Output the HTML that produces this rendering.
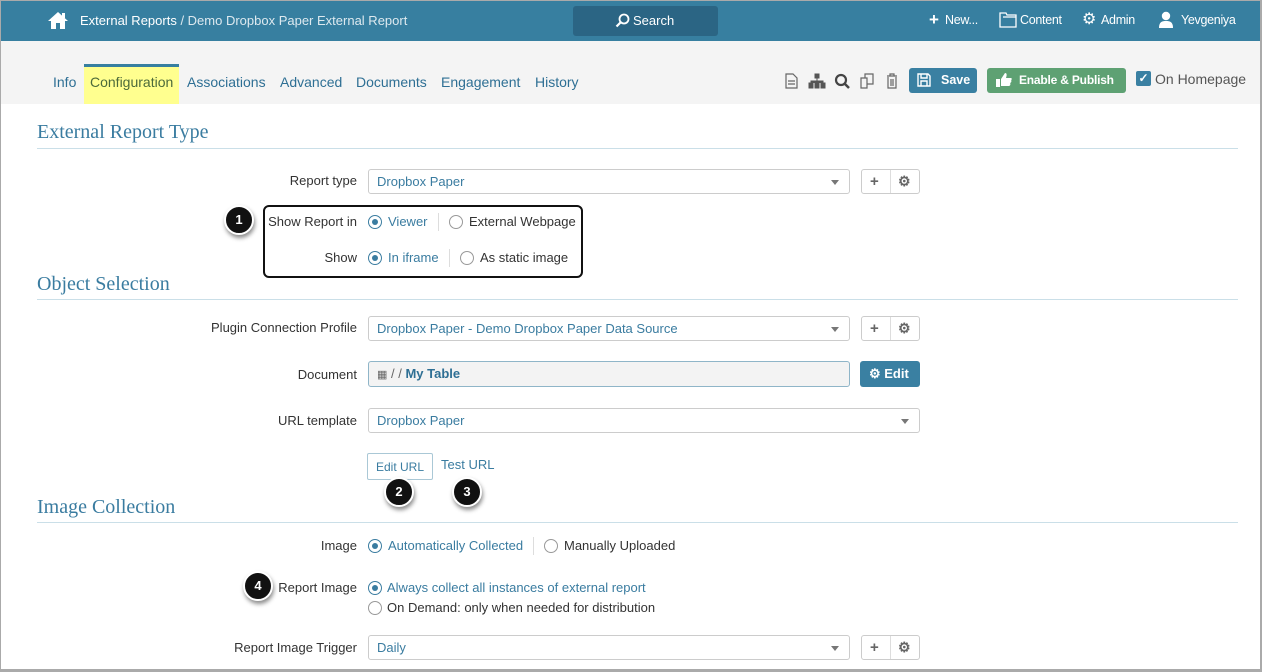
<!DOCTYPE html>
<html><head><meta charset="utf-8"><style>
*{box-sizing:border-box;margin:0;padding:0}
body{width:1262px;height:672px;overflow:hidden;background:#fff;font-family:"Liberation Sans",sans-serif;font-size:13px;color:#333;position:relative}
.a{position:absolute}
.frame{position:absolute;left:0;top:0;width:1262px;height:672px;border:1px solid #aaa;border-bottom:3px solid #aaa;border-right:2px solid #aaa;pointer-events:none;z-index:10}
.hdr{left:0;top:0;width:1262px;height:41px;background:#377fa0;color:#fff}
.tabbar{left:0;top:41px;width:1262px;height:63px;background:#f4f4f4}
.tab{position:absolute;top:74px;font-size:14px;color:#2e6f94}
h2{position:absolute;left:37px;font-family:"Liberation Serif",serif;font-weight:normal;font-size:20px;color:#3a7ca0}
.hl{position:absolute;left:37px;width:1201px;height:1px;background:#cadfe8}
.lbl{position:absolute;right:905px;font-size:13px;color:#333;text-align:right;white-space:nowrap;margin-top:-1px}
.inp{position:absolute;left:368px;height:25px;border:1px solid #ccc;border-radius:3px;background:#fff;color:#3a7ca0;padding:4px 8px;font-size:13px}
.caret{position:absolute;right:10px;top:10px;width:0;height:0;border-left:4px solid transparent;border-right:4px solid transparent;border-top:5px solid #777}
.btns{position:absolute;left:861px;width:59px;height:25px;border:1px solid #ccc;border-radius:3px;background:#fff}
.btns span{position:absolute;top:3px;font-size:15px;color:#666;font-weight:bold}
.btns i{position:absolute;left:28px;top:0;width:1px;height:23px;background:#ddd}
.rad{position:absolute;width:14px;height:14px;border:1px solid #999;border-radius:50%;background:#fff}
.rad.on{border-color:#3a7ca0}
.rad.on:after{content:"";position:absolute;left:3px;top:3px;width:6px;height:6px;border-radius:50%;background:#3a7ca0}
.rt{position:absolute;font-size:13px;white-space:nowrap;margin-top:-1px}
.blue{color:#3a7ca0}
.sep{position:absolute;width:1px;height:18px;background:#ddd}
.num{position:absolute;width:30px;height:30px;border-radius:50%;background:#111;color:#fff;font-weight:bold;font-size:13px;text-align:center;line-height:26px;box-shadow:1px 3px 4px rgba(0,0,0,.45);border:2px solid #fff}
</style></head><body>
<div class="a hdr">
 <svg class="a" style="left:47px;top:11px" width="22" height="18" viewBox="0 0 22 18"><path d="M11 1 L1 10 L4 10 L4 18 L9 18 L9 12 L13 12 L13 18 L18 18 L18 10 L21 10 Z" fill="#fff"/><rect x="15" y="2" width="3" height="5" fill="#fff"/></svg>
 <div class="a" style="left:80px;top:13px;font-size:13px">External Reports <span style="color:#dde9ef">/ Demo Dropbox Paper External Report</span></div>
 <div class="a" style="left:573px;top:6px;width:145px;height:30px;background:#2b6584;border-radius:3px"></div>
 <svg class="a" style="left:615px;top:13px" width="15" height="15" viewBox="0 0 15 15"><circle cx="9" cy="6" r="4.5" fill="none" stroke="#fff" stroke-width="1.8"/><path d="M6 9 L1.5 13.5" stroke="#fff" stroke-width="2.2"/></svg>
 <div class="a" style="left:633px;top:13px;font-size:13px">Search</div>
 <div class="a" style="left:929px;top:10px;font-size:17px;font-weight:bold">+</div>
 <div class="a" style="left:945px;top:13px;font-size:12.5px;letter-spacing:-.3px">New...</div>
 <svg class="a" style="left:999px;top:12px" width="18" height="16" viewBox="0 0 18 16"><path d="M1 1 H7 L8 3 H17 V15 H1 Z M4 5 H17" fill="none" stroke="#fff" stroke-width="1.3"/></svg>
 <div class="a" style="left:1020px;top:13px;font-size:12.5px;letter-spacing:-.3px">Content</div>
 <div class="a" style="left:1082px;top:9px;font-size:16px">⚙</div>
 <div class="a" style="left:1101px;top:13px;font-size:12.5px;letter-spacing:-.3px">Admin</div>
 <svg class="a" style="left:1158px;top:11px" width="16" height="17" viewBox="0 0 16 17"><circle cx="8" cy="5" r="4.2" fill="#fff"/><path d="M1 17 C1 11 4 10 8 10 C12 10 15 11 15 17 Z" fill="#fff"/></svg>
 <div class="a" style="left:1181px;top:13px;font-size:12.5px;letter-spacing:-.3px">Yevgeniya</div>
</div>
<div class="a tabbar"></div>
<div class="a" style="left:84px;top:64px;width:95px;height:40px;background:#ffff8f;border-top:3px solid #377fa0"></div>
<div class="tab" style="left:53px">Info</div>
<div class="tab" style="left:90px;color:#4c6a3a">Configuration</div>
<div class="tab" style="left:187px">Associations</div>
<div class="tab" style="left:280px">Advanced</div>
<div class="tab" style="left:356px">Documents</div>
<div class="tab" style="left:441px">Engagement</div>
<div class="tab" style="left:535px">History</div>
<svg class="a" style="left:784px;top:72px" width="120" height="18" viewBox="0 0 120 18">
 <path d="M2 2 H9 L13 6 V16 H2 Z M4 9 H11 M4 12 H11" fill="none" stroke="#666" stroke-width="1.2"/>
 <path d="M31 2 h4 v4 h-4z M25 11 h4 v5 h-4z M31 11 h4 v5 h-4z M37 11 h4 v5 h-4z M33 6 v5 M27 11 v-2 h12 v2" fill="#555" stroke="#555" stroke-width="1"/>
 <circle cx="57" cy="8" r="5" fill="none" stroke="#444" stroke-width="2.2"/><path d="M61 12 L65 16" stroke="#444" stroke-width="2.5"/>
 <path d="M77 6 H83 V16 H77 Z M81 6 V2 H89 V12 H83" fill="none" stroke="#666" stroke-width="1.2"/>
 <path d="M103 4 H113 M106 4 V2 H110 V4 M104 5 V16 H112 V5 M107 7 V14 M109 7 V14" fill="none" stroke="#666" stroke-width="1.2"/>
</svg>
<div class="a" style="left:909px;top:68px;width:68px;height:25px;background:#3a80a2;border-radius:3px;color:#fff;font-weight:bold;font-size:12.5px;padding:5px 0 0 32px">Save</div>
<svg class="a" style="left:917px;top:73px" width="14" height="14" viewBox="0 0 14 14"><path d="M1 1 H11 L13 3 V13 H1 Z M4 1 V5 H10 V1 M4 13 V8 H10 V13" fill="none" stroke="#fff" stroke-width="1.4"/></svg>
<div class="a" style="left:987px;top:68px;width:139px;height:25px;background:#5ea173;border-radius:3px;color:#fff;font-weight:bold;font-size:12px;letter-spacing:-.2px;padding:5px 0 0 32px;white-space:nowrap">Enable &amp; Publish</div>
<svg class="a" style="left:995px;top:72px" width="18" height="16" viewBox="0 0 18 16"><path d="M1 7 H5 V15 H1 Z M6 7 L10 1 C12 1 12 3 11 6 H16 C17 6 17 8 16 8 C17 9 16 11 15 11 C16 12 15 14 14 14 L6 14 Z" fill="#fff"/></svg>
<div class="a" style="left:1136px;top:71px;width:15px;height:15px;background:#3a80a2;border-radius:2px;color:#fff;font-size:12px;line-height:15px;text-align:center;font-weight:bold">✓</div>
<div class="a" style="left:1155px;top:71px;font-size:14px;color:#555">On Homepage</div>

<h2 style="top:121px">External Report Type</h2>
<div class="hl" style="top:148px"></div>
<div class="lbl" style="top:174px">Report type</div>
<div class="inp" style="top:169px;width:482px">Dropbox Paper<span class="caret"></span></div>
<div class="btns" style="top:169px"><span style="left:8px">+</span><i></i><span style="left:36px;font-size:14px">⚙</span></div>

<div class="a" style="left:263px;top:205px;width:320px;height:73px;border:2px solid #111;border-radius:6px"></div>
<div class="num" style="left:224px;top:205px">1</div>
<div class="lbl" style="top:215px">Show Report in</div>
<div class="rad on" style="left:368px;top:215px"></div><div class="rt blue" style="left:388px;top:215px">Viewer</div>
<div class="sep" style="left:438px;top:213px"></div>
<div class="rad" style="left:449px;top:215px"></div><div class="rt" style="left:469px;top:215px">External Webpage</div>
<div class="lbl" style="top:251px">Show</div>
<div class="rad on" style="left:368px;top:251px"></div><div class="rt blue" style="left:388px;top:251px">In iframe</div>
<div class="sep" style="left:449px;top:249px"></div>
<div class="rad" style="left:460px;top:251px"></div><div class="rt" style="left:480px;top:251px">As static image</div>

<h2 style="top:273px">Object Selection</h2>
<div class="hl" style="top:299px"></div>
<div class="lbl" style="top:321px">Plugin Connection Profile</div>
<div class="inp" style="top:316px;width:482px">Dropbox Paper - Demo Dropbox Paper Data Source<span class="caret"></span></div>
<div class="btns" style="top:316px"><span style="left:8px">+</span><i></i><span style="left:36px;font-size:14px">⚙</span></div>
<div class="lbl" style="top:368px">Document</div>
<div class="inp" style="top:361px;width:482px;height:26px;background:#f3f3f3;border-color:#8fb5c8;color:#666"><span style="font-size:11px">▦</span> / / <b style="color:#2e6f94">My Table</b></div>
<div class="a" style="left:860px;top:361px;width:60px;height:26px;background:#3a80a2;border-radius:3px;color:#fff;font-weight:bold;padding:5px 0 0 9px">⚙ Edit</div>
<div class="lbl" style="top:414px">URL template</div>
<div class="inp" style="top:408px;width:552px">Dropbox Paper<span class="caret"></span></div>
<div class="a" style="left:367px;top:453px;width:66px;height:27px;border:1px solid #aac8d6;border-radius:2px;font-size:12px;color:#3a7ca0;padding:6px 0 0 8px">Edit URL</div>
<div class="a" style="left:441px;top:457px;font-size:13px;color:#3a7ca0">Test URL</div>
<div class="num" style="left:384px;top:477px">2</div>
<div class="num" style="left:452px;top:477px">3</div>

<h2 style="top:496px">Image Collection</h2>
<div class="hl" style="top:522px"></div>
<div class="lbl" style="top:539px">Image</div>
<div class="rad on" style="left:368px;top:539px"></div><div class="rt blue" style="left:388px;top:539px">Automatically Collected</div>
<div class="sep" style="left:533px;top:537px"></div>
<div class="rad" style="left:544px;top:539px"></div><div class="rt" style="left:564px;top:539px">Manually Uploaded</div>
<div class="num" style="left:243px;top:571px">4</div>
<div class="lbl" style="top:581px">Report Image</div>
<div class="rad on" style="left:368px;top:581px"></div><div class="rt blue" style="left:387px;top:581px">Always collect all instances of external report</div>
<div class="rad" style="left:368px;top:601px"></div><div class="rt" style="left:387px;top:601px">On Demand: only when needed for distribution</div>
<div class="lbl" style="top:641px">Report Image Trigger</div>
<div class="inp" style="top:635px;width:482px">Daily<span class="caret"></span></div>
<div class="btns" style="top:635px"><span style="left:8px">+</span><i></i><span style="left:36px;font-size:14px">⚙</span></div>
<div class="frame"></div>
</body></html>
